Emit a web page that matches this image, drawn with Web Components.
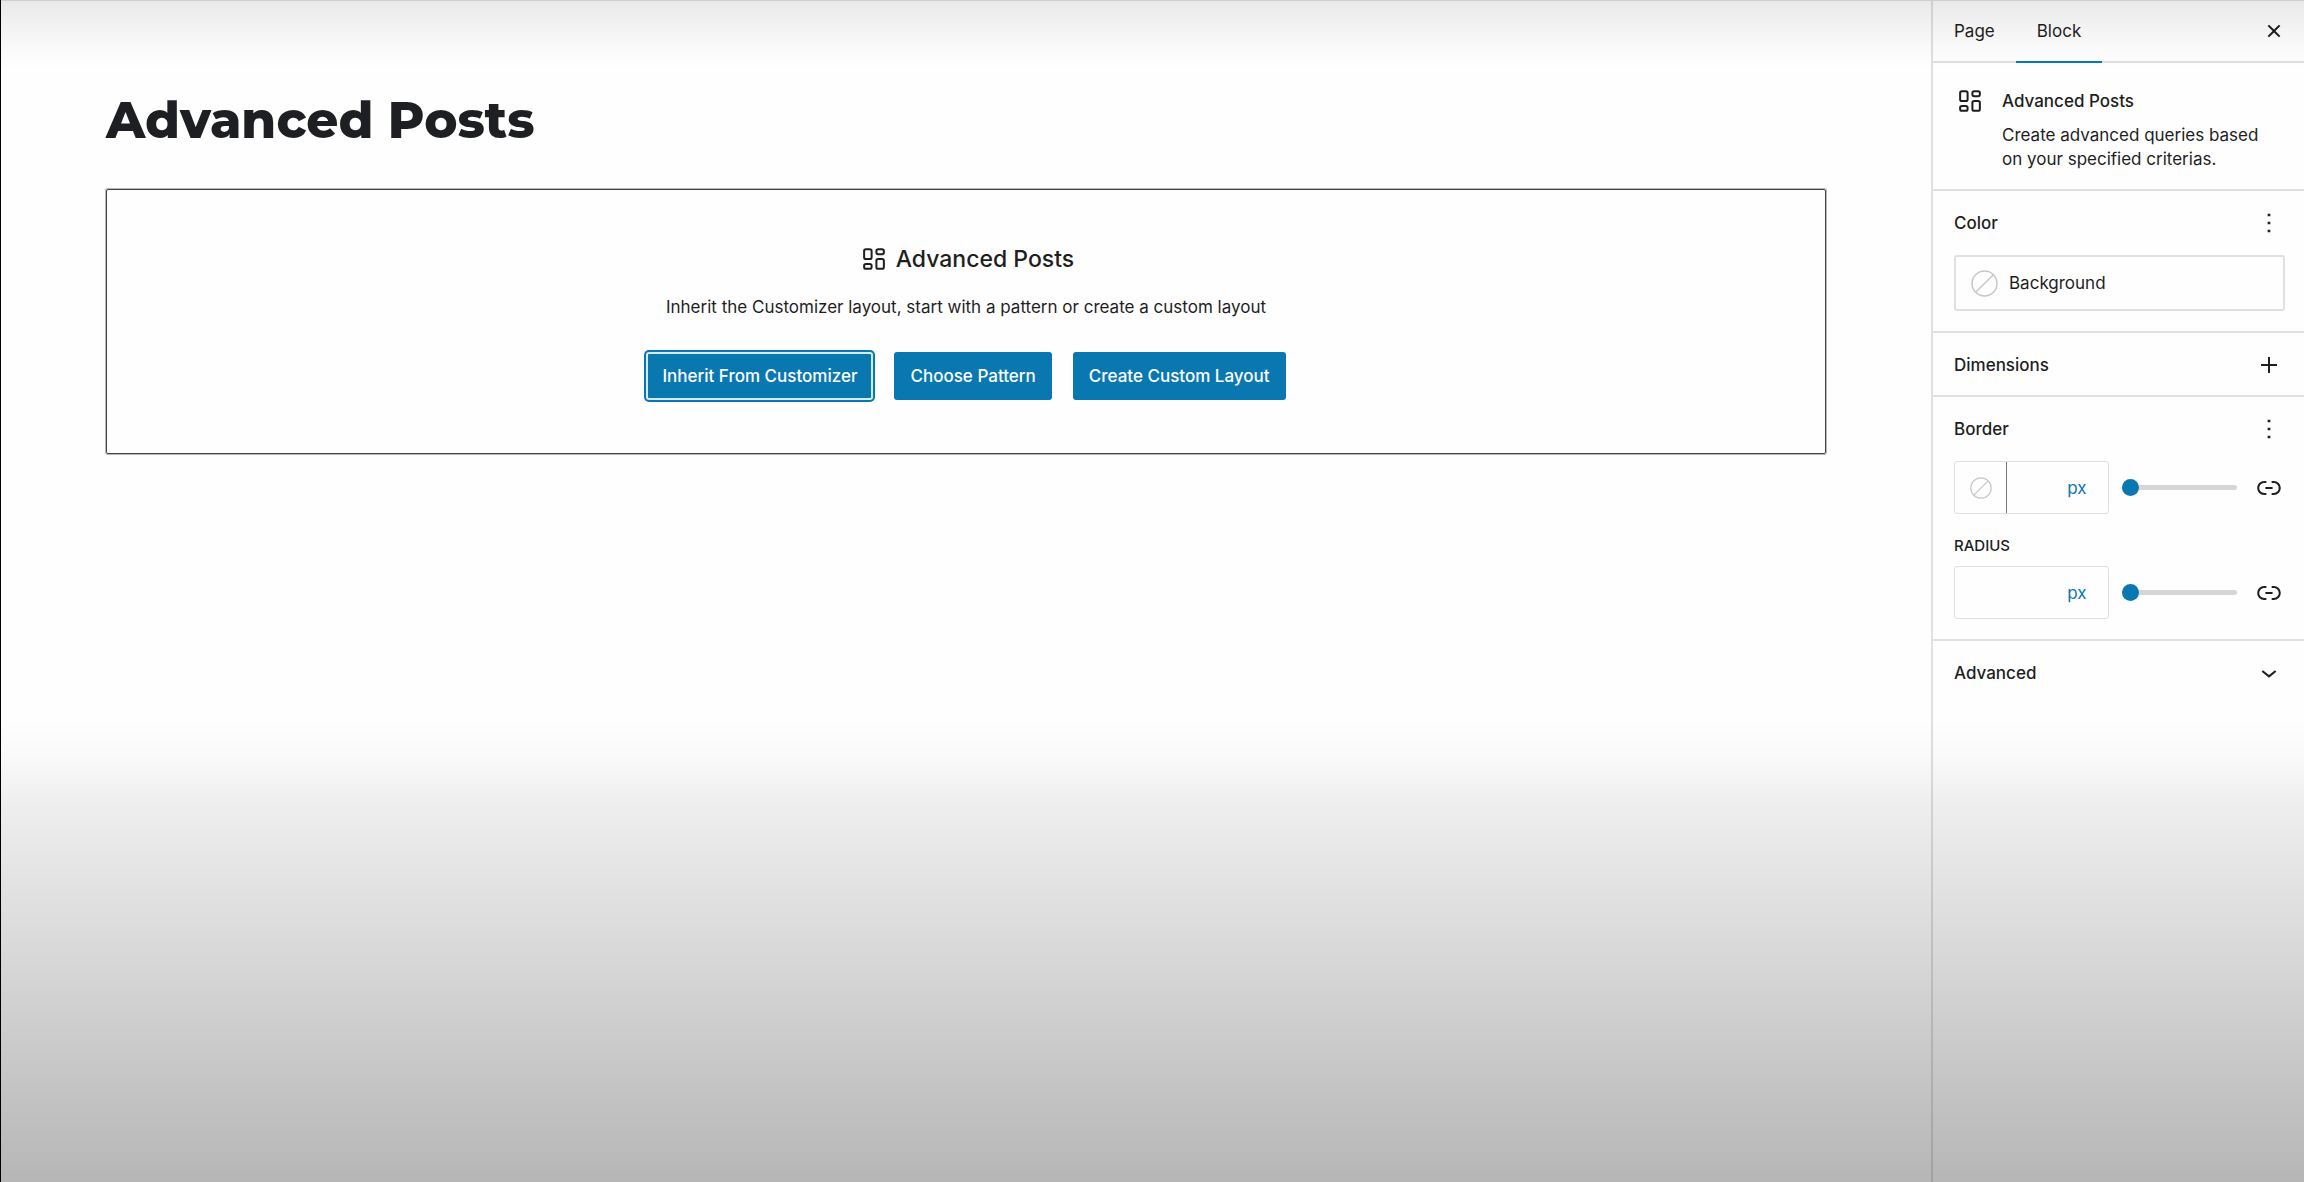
<!DOCTYPE html>
<html lang="en">
<head>
<meta charset="utf-8">
<title>Advanced Posts</title>
<style>
  html, body { margin: 0; height: 100%; }
  body {
    font: 400 17px/24px Inter, "Liberation Sans", sans-serif;
    color: #1e1e1e;
    background: #fefefe;
    --accent: #0a78b0;
    --line: #e0e0e0;
  }
</style>
</head>
<body>
<editor-shell>
  <editor-canvas heading="Advanced Posts">
    <block-placeholder heading="Advanced Posts">
      <span slot="text">Inherit the Customizer layout, start with a pattern or create a custom layout</span>
      <action-button focused>Inherit From Customizer</action-button>
      <action-button>Choose Pattern</action-button>
      <action-button>Create Custom Layout</action-button>
    </block-placeholder>
  </editor-canvas>
  <block-inspector slot="side">
    <block-card heading="Advanced Posts">Create advanced queries based on your specified criterias.</block-card>
    <panel-section heading="Color" icon="more">
      <color-row>Background</color-row>
    </panel-section>
    <panel-section heading="Dimensions" icon="plus"></panel-section>
    <panel-section heading="Border" icon="more">
      <unit-control name="Border width" swatch></unit-control>
      <unit-control name="Radius" caption="RADIUS"></unit-control>
    </panel-section>
    <panel-section heading="Advanced" icon="chevron" last></panel-section>
  </block-inspector>
</editor-shell>

<script>
const ICONS = {
  grid: '<g fill="none" stroke="currentColor" stroke-width="1.5"><rect x="4.6" y="4.6" width="5.6" height="7.4" rx="1.4"/><rect x="13.8" y="4.6" width="5.6" height="3.8" rx="1.4"/><rect x="4.6" y="15.7" width="5.6" height="3.7" rx="1.4"/><rect x="13.8" y="12" width="5.6" height="7.4" rx="1.4"/></g>',
  close: '<path d="M12 13.06l3.712 3.713 1.061-1.06L13.061 12l3.712-3.712-1.06-1.06L12 10.938 8.288 7.227l-1.061 1.06L10.939 12l-3.712 3.712 1.06 1.061L12 13.061z"/>',
  more: '<path d="M13 19h-2v-2h2v2zm0-6h-2v-2h2v2zm0-6h-2V5h2v2z"/>',
  plus: '<path d="M11.25 12.75V18h1.5v-5.25H18v-1.5h-5.25V6h-1.5v5.25H6v1.5z"/>',
  chevron: '<path d="M17.5 11.1L12 15.5l-5.5-4.4.9-1.2L12 13.5l4.5-3.6 1 1.2z"/>',
  link: '<path d="M15.6 6.8H14v1.5h1.6c2 0 3.7 1.7 3.7 3.7s-1.7 3.7-3.7 3.7H14v1.5h1.6c2.8 0 5.2-2.3 5.2-5.2 0-2.9-2.3-5.2-5.2-5.2zM4.7 12c0-2 1.7-3.7 3.7-3.7H10V6.8H8.4C5.5 6.8 3.2 9.1 3.2 12c0 2.9 2.3 5.2 5.2 5.2H10v-1.5H8.4c-2 0-3.7-1.7-3.7-3.7zm4.6.75h5.4v-1.5H9.3v1.5z"/>'
};

const RESET = `
  * { box-sizing: border-box; }
  button { font: inherit; color: inherit; background: none; border: 0; padding: 0; margin: 0; cursor: pointer; }
`;

class Base extends HTMLElement {
  connectedCallback() {
    if (this.shadowRoot) return;
    this.attachShadow({ mode: 'open' }).innerHTML = `<style>${RESET}${this.styles()}</style>${this.markup()}`;
  }
  attr(name) { return this.getAttribute(name) || ''; }
}

customElements.define('ui-icon', class extends Base {
  styles() { return `:host { display: block; width: 32px; height: 32px; flex: none; } svg { display: block; width: 100%; height: 100%; }`; }
  markup() { return `<svg viewBox="0 0 24 24" fill="currentColor" aria-hidden="true">${ICONS[this.attr('name')]}</svg>`; }
});

customElements.define('empty-swatch', class extends Base {
  styles() { return `:host { display: block; width: 27px; height: 27px; flex: none; color: #c8c8c8; } svg { display: block; width: 100%; height: 100%; }`; }
  markup() { return `<svg viewBox="0 0 27 27" fill="none" stroke="currentColor" stroke-width="1.5" aria-hidden="true"><circle cx="13.5" cy="13.5" r="12.5"/><path d="M4.7 22.3L22.3 4.7"/></svg>`; }
});

customElements.define('editor-shell', class extends Base {
  styles() { return `
    :host { display: flex; min-height: 100vh; box-sizing: border-box; border-left: 1px solid #000; }
    main { flex: 1; min-width: 0; }
    aside { flex: none; width: 373px; border-left: 2px solid var(--line); }
    .shade { position: fixed; inset: 0; pointer-events: none; border-top: 1px solid #cfcfcf; margin-left: 1px;
      background:
        linear-gradient(rgba(0,0,0,.078), rgba(0,0,0,.06) 15px, rgba(0,0,0,.016) 48px, transparent 68px),
        linear-gradient(to top, rgba(0,0,0,.284), rgba(0,0,0,.118) 281px, rgba(0,0,0,.063) 376px, rgba(0,0,0,.02) 424px, transparent 464px); }
  `; }
  markup() { return `<main><slot></slot></main><aside><slot name="side"></slot></aside><div class="shade"></div>`; }
});

customElements.define('editor-canvas', class extends Base {
  styles() { return `
    :host { display: block; padding: 89px 105px; }
    h1 { margin: 0 0 36px; font: 800 50px/64px Montserrat, Inter, sans-serif; color: #1e1f22; }
  `; }
  markup() { return `<h1>${this.attr('heading')}</h1><slot></slot>`; }
});

customElements.define('block-placeholder', class extends Base {
  styles() { return `
    :host { display: flex; flex-direction: column; align-items: center; box-sizing: border-box; border: 1px solid #444; box-shadow: 0 0 0 1px #b8b8b8; border-radius: 2px; padding: 53px 20px; }
    h2 { display: flex; align-items: center; gap: 6px; margin: 0; font-weight: 500; font-size: 23px; line-height: 32px; }
    p { margin: 20px 0 33px; }
    .actions { display: flex; flex-wrap: wrap; gap: 21px; }
  `; }
  markup() { return `<h2><ui-icon name="grid"></ui-icon>${this.attr('heading')}</h2><p><slot name="text"></slot></p><div class="actions"><slot></slot></div>`; }
});

customElements.define('action-button', class extends Base {
  styles() { return `
    :host { display: block; }
    button { display: block; height: 48px; padding: 0 16px; border-radius: 3px; background: var(--accent); color: #fff; font-weight: 500; }
    :host([focused]) button { box-shadow: 0 0 0 2px var(--accent), inset 0 0 0 2px #d3ecf8; }
  `; }
  markup() { return `<button type="button"><slot></slot></button>`; }
});

customElements.define('block-inspector', class extends Base {
  styles() { return `
    :host { display: block; }
    header { display: flex; align-items: center; height: 63px; padding: 1px 14px 0 0; border-bottom: 2px solid var(--line); }
    [role=tab] { align-self: stretch; margin-bottom: -2px; padding: 0 21px; border-bottom: 2px solid transparent; }
    [aria-selected=true] { border-bottom-color: var(--accent); }
    .close { margin-left: auto; }
  `; }
  markup() { return `<header role="tablist">
    <button type="button" role="tab" aria-selected="false">Page</button>
    <button type="button" role="tab" aria-selected="true">Block</button>
    <button type="button" class="close" aria-label="Close settings"><ui-icon name="close"></ui-icon></button>
  </header><slot></slot>`; }
});

customElements.define('block-card', class extends Base {
  styles() { return `
    :host { display: flex; gap: 16px; padding: 22px 32px 18px 21px; border-bottom: 2px solid var(--line); }
    h2 { margin: 0 0 6px; font-size: 17px; line-height: 32px; font-weight: 500; }
    p { margin: 0; max-width: 272px; }
  `; }
  markup() { return `<ui-icon name="grid"></ui-icon><div><h2>${this.attr('heading')}</h2><p><slot></slot></p></div>`; }
});

customElements.define('panel-section', class extends Base {
  styles() { return `
    :host { display: block; padding: 16px 19px 14px 21px; border-bottom: 2px solid var(--line); }
    :host([last]) { border-bottom: 0; }
    .head { display: flex; align-items: center; justify-content: space-between; }
    h2 { margin: 0; font-size: 17px; line-height: 32px; font-weight: 500; }
    ::slotted(:first-child) { margin-top: 16px; }
    ::slotted(:last-child) { margin-bottom: 6px; }
  `; }
  markup() { return `<div class="head"><h2>${this.attr('heading')}</h2><button type="button" aria-label="${this.attr('heading')} options"><ui-icon name="${this.attr('icon')}"></ui-icon></button></div><slot></slot>`; }
});

customElements.define('color-row', class extends Base {
  styles() { return `
    :host { display: block; }
    button { display: flex; align-items: center; gap: 11px; width: 100%; height: 56px; padding: 0 15px; border: 2px solid var(--line); border-radius: 3px; }
  `; }
  markup() { return `<button type="button"><empty-swatch></empty-swatch><span><slot></slot></span></button>`; }
});

customElements.define('unit-control', class extends Base {
  styles() { return `
    :host { display: block; }
    label { display: block; margin: 22px 0 10px; font-size: 15px; line-height: 20px; font-weight: 500; }
    .row { display: flex; align-items: center; }
    .field { display: flex; width: 155px; height: 53px; border: 1px solid var(--line); border-radius: 3px; }
    .swatch { display: flex; align-items: center; justify-content: center; width: 52px; border-right: 1px solid #777; }
    .swatch empty-swatch { width: 22px; height: 22px; }
    input[type=text] { flex: 1; min-width: 0; border: 0; background: none; font: inherit; padding: 0 0 0 10px; outline: 0; }
    select { appearance: none; width: 44px; margin-right: 9px; padding: 0; border: 0; background: none; font: inherit; color: var(--accent); text-align: center; text-align-last: center; }
    input[type=range] { appearance: none; flex: 1; min-width: 0; height: 17px; margin: 0 16px 0 13px; background: none; }
    input[type=range]::-webkit-slider-runnable-track { height: 5px; border-radius: 3px; background: #d6d6d6; }
    input[type=range]::-webkit-slider-thumb { appearance: none; width: 17px; height: 17px; margin-top: -6px; border-radius: 50%; background: var(--accent); }
  `; }
  markup() {
    const name = this.attr('name'), caption = this.attr('caption');
    return `${caption ? `<label for="value">${caption}</label>` : ''}
    <div class="row">
      <div class="field">
        ${this.hasAttribute('swatch') ? '<button type="button" class="swatch" aria-label="Border color"><empty-swatch></empty-swatch></button>' : ''}
        <input type="text" id="value" inputmode="numeric" aria-label="${name}">
        <select aria-label="${name} unit"><option>px</option></select>
      </div>
      <input type="range" min="0" max="100" value="0" aria-label="${name} slider">
      <button type="button" aria-label="Unlink sides"><ui-icon name="link"></ui-icon></button>
    </div>`;
  }
});
</script>
</body>
</html>
